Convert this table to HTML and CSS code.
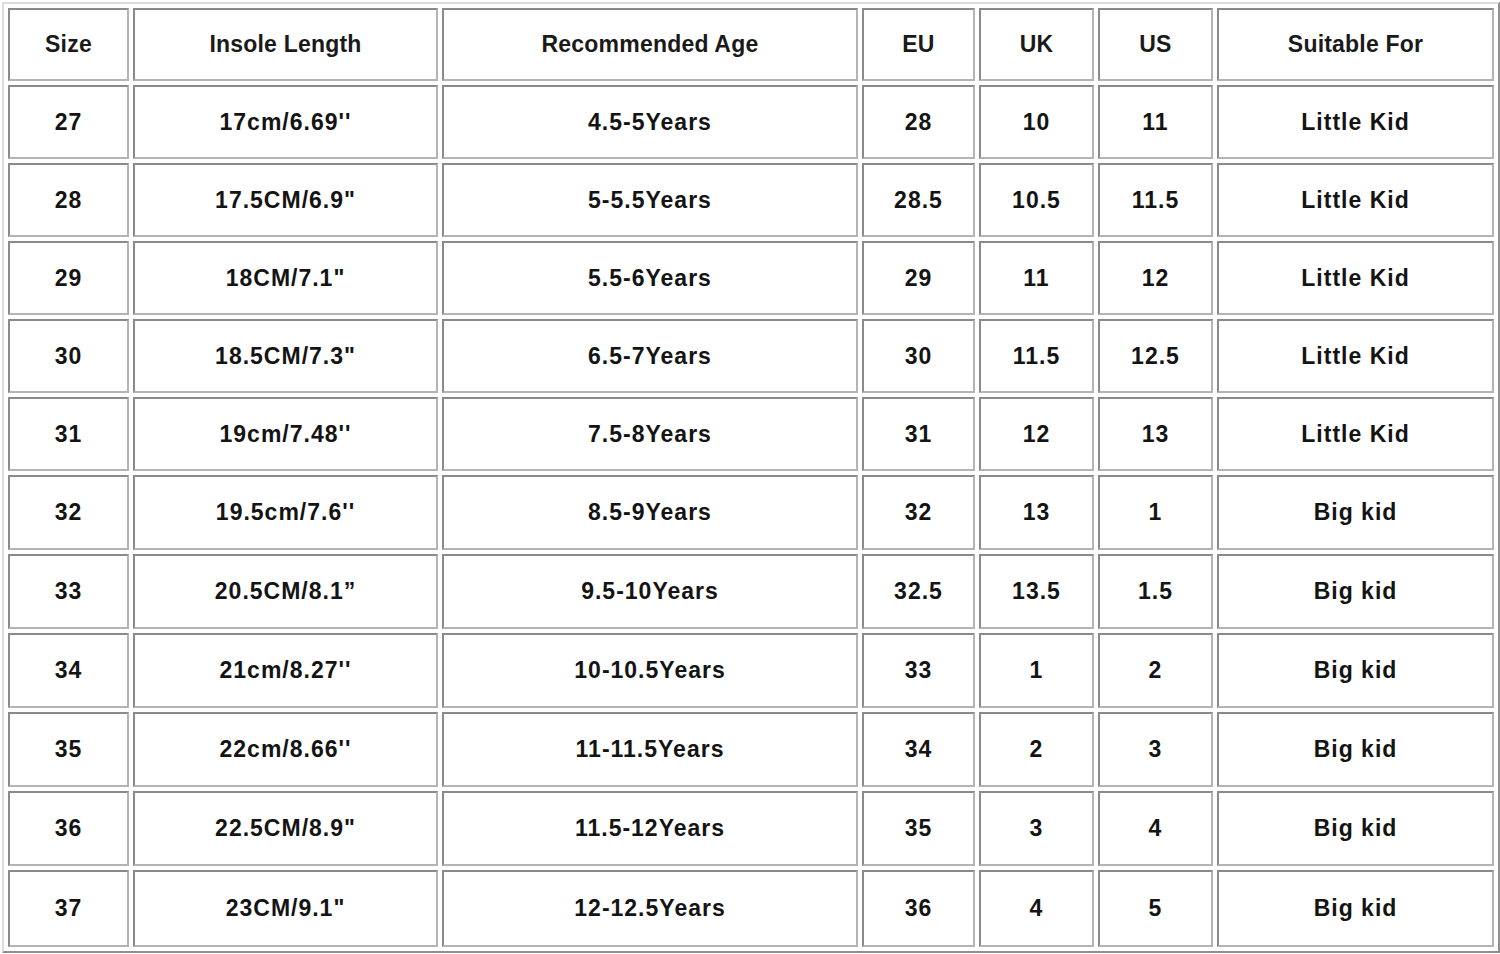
FILE: index.html
```html
<!DOCTYPE html>
<html>
<head>
<meta charset="utf-8">
<link rel="stylesheet" href="styles.css">
</head>
<body>
<table class="size-table">
  <colgroup>
    <col class="c1"><col class="c2"><col class="c3"><col class="c4"><col class="c5"><col class="c6"><col class="c7">
  </colgroup>
  <thead>
    <tr class="head"><th>Size</th><th>Insole Length</th><th>Recommended Age</th><th>EU</th><th>UK</th><th>US</th><th>Suitable For</th></tr>
  </thead>
  <tbody>
    <tr><td>27</td><td>17cm/6.69''</td><td>4.5-5Years</td><td>28</td><td>10</td><td>11</td><td>Little Kid</td></tr>
    <tr><td>28</td><td>17.5CM/6.9"</td><td>5-5.5Years</td><td>28.5</td><td>10.5</td><td>11.5</td><td>Little Kid</td></tr>
    <tr><td>29</td><td>18CM/7.1"</td><td>5.5-6Years</td><td>29</td><td>11</td><td>12</td><td>Little Kid</td></tr>
    <tr><td>30</td><td>18.5CM/7.3"</td><td>6.5-7Years</td><td>30</td><td>11.5</td><td>12.5</td><td>Little Kid</td></tr>
    <tr><td>31</td><td>19cm/7.48''</td><td>7.5-8Years</td><td>31</td><td>12</td><td>13</td><td>Little Kid</td></tr>
    <tr class="tall"><td>32</td><td>19.5cm/7.6''</td><td>8.5-9Years</td><td>32</td><td>13</td><td>1</td><td>Big kid</td></tr>
    <tr class="tall"><td>33</td><td>20.5CM/8.1”</td><td>9.5-10Years</td><td>32.5</td><td>13.5</td><td>1.5</td><td>Big kid</td></tr>
    <tr class="tall"><td>34</td><td>21cm/8.27''</td><td>10-10.5Years</td><td>33</td><td>1</td><td>2</td><td>Big kid</td></tr>
    <tr class="tall"><td>35</td><td>22cm/8.66''</td><td>11-11.5Years</td><td>34</td><td>2</td><td>3</td><td>Big kid</td></tr>
    <tr class="tall"><td>36</td><td>22.5CM/8.9"</td><td>11.5-12Years</td><td>35</td><td>3</td><td>4</td><td>Big kid</td></tr>
    <tr class="last"><td>37</td><td>23CM/9.1"</td><td>12-12.5Years</td><td>36</td><td>4</td><td>5</td><td>Big kid</td></tr>
  </tbody>
</table>
</body>
</html>
```

FILE: styles.css
```css
html, body {
  margin: 0;
  padding: 0;
  background: #ffffff;
}

body {
  padding: 2px 0 0 2px;
  font-family: "Liberation Sans", Arial, sans-serif;
  color: #141414;
}

.size-table {
  table-layout: fixed;
  border-collapse: separate;
  border-spacing: 4px;
  border-style: solid;
  border-width: 2px;
  border-color: #dcdcdc #8e8e8e #8e8e8e #dcdcdc;
  width: 1495px;
}

.c1 { width: 121px; }
.c2 { width: 305px; }
.c3 { width: 416px; }
.c4 { width: 113px; }
.c5 { width: 115px; }
.c6 { width: 115px; }
.c7 { width: 277px; }

.size-table th,
.size-table td {
  box-sizing: border-box;
  border-style: solid;
  border-width: 2px;
  border-color: #8a8a8a #b4b4b4 #b4b4b4 #8a8a8a;
  text-align: center;
  vertical-align: middle;
  padding: 0;
  font-weight: bold;
  letter-spacing: 1px;
}

.size-table th {
  font-size: 23px;
  letter-spacing: 0.2px;
  color: #1a1a1a;
}

.size-table td {
  font-size: 23px;
}

.size-table tr { height: 74px; }
.size-table tr.tall { height: 75px; }
.size-table tr.last { height: 77px; }
.size-table tr.head { height: 73px; }
```
